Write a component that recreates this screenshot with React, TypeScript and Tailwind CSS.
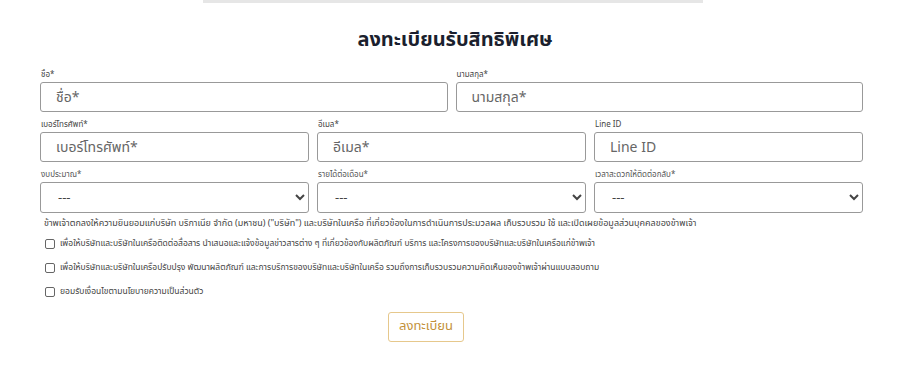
import React from 'react';

const font = { fontFamily: '"Noto Sans Thai", "Noto Sans", "Liberation Sans", sans-serif' };

function Field({ label, placeholder }: { label: string; placeholder: string }) {
  return (
    <div className="flex flex-col">
      <label className="h-[14px] pl-[1px] text-[8px] leading-[14px] text-[#444]">{label}</label>
      <input
        placeholder={placeholder}
        className="h-[30px] w-full rounded-[3px] border border-[#999] bg-white px-[15px] text-[14px] text-[#333] outline-none placeholder:text-[#666]"
      />
    </div>
  );
}

function SelectField({ label }: { label: string }) {
  return (
    <div className="flex flex-col">
      <label className="h-[14px] pl-[1px] text-[8px] leading-[14px] text-[#555]">{label}</label>
      <select className="h-[31px] w-full rounded-[3px] border border-[#999] bg-white pl-[13px] pr-[4px] text-[13px] text-[#444]">
        <option>---</option>
      </select>
    </div>
  );
}

function Consent({ text }: { text: string }) {
  return (
    <label className="flex h-[24px] items-center gap-[5px] pl-[5px] text-[8.5px] text-[#444]">
      <input type="checkbox" className="h-[10px] w-[10px] appearance-none rounded-[2px] border border-[#666] bg-white" />
      <span>{text}</span>
    </label>
  );
}

export default function App() {
  return (
    <div className="h-[376px] w-[900px] bg-white" style={font}>
      <div className="ml-[203px] h-[3px] w-[500px] bg-[#e6e6e6]" />
      <h1 className="mt-[23px] h-[28px] pl-[10px] text-center text-[20px] font-bold leading-[28px] text-[#1b1f2e]">
        ลงทะเบียนรับสิทธิพิเศษ
      </h1>

      <div className="ml-[40px] mt-[14px] w-[823px]">
        <div className="grid grid-cols-2 gap-x-[8px]">
          <Field label="ชื่อ*" placeholder="ชื่อ*" />
          <Field label="นามสกุล*" placeholder="นามสกุล*" />
        </div>
        <div className="mt-[6px] grid grid-cols-3 gap-x-[8px]">
          <Field label="เบอร์โทรศัพท์*" placeholder="เบอร์โทรศัพท์*" />
          <Field label="อีเมล*" placeholder="อีเมล*" />
          <Field label="Line ID" placeholder="Line ID" />
        </div>
        <div className="mt-[6px] grid grid-cols-3 gap-x-[8px]">
          <SelectField label="งบประมาณ*" />
          <SelectField label="รายได้ต่อเดือน*" />
          <SelectField label="เวลาสะดวกให้ติดต่อกลับ*" />
        </div>

        <p className="mt-[3px] h-[14px] pl-[4px] text-[9px] leading-[14px] text-[#444]">
          ข้าพเจ้าตกลงให้ความยินยอมแก่บริษัท บริกาเนีย จำกัด (มหาชน) ("บริษัท") และบริษัทในเครือ ที่เกี่ยวข้องในการดำเนินการประมวลผล เก็บรวบรวม ใช้ และเปิดเผยข้อมูลส่วนบุคคลของข้าพเจ้า
        </p>

        <div className="mt-[2px] flex flex-col">
          <Consent text="เพื่อให้บริษัทและบริษัทในเครือติดต่อสื่อสาร นำเสนอและแจ้งข้อมูลข่าวสารต่าง ๆ ที่เกี่ยวข้องกับผลิตภัณฑ์ บริการ และโครงการของบริษัทและบริษัทในเครือแก่ข้าพเจ้า" />
          <Consent text="เพื่อให้บริษัทและบริษัทในเครือปรับปรุง พัฒนาผลิตภัณฑ์ และการบริการของบริษัทและบริษัทในเครือ รวมถึงการเก็บรวบรวมความคิดเห็นของข้าพเจ้าผ่านแบบสอบถาม" />
          <Consent text="ยอมรับเงื่อนไขตามนโยบายความเป็นส่วนตัว" />
        </div>
      </div>

      <div className="ml-[388px] mt-[8px]">
        <button className="h-[30px] w-[76px] rounded-[3px] border border-[#e6c88c] bg-white text-[13px] text-[#c3913a]">
          ลงทะเบียน
        </button>
      </div>
    </div>
  );
}
